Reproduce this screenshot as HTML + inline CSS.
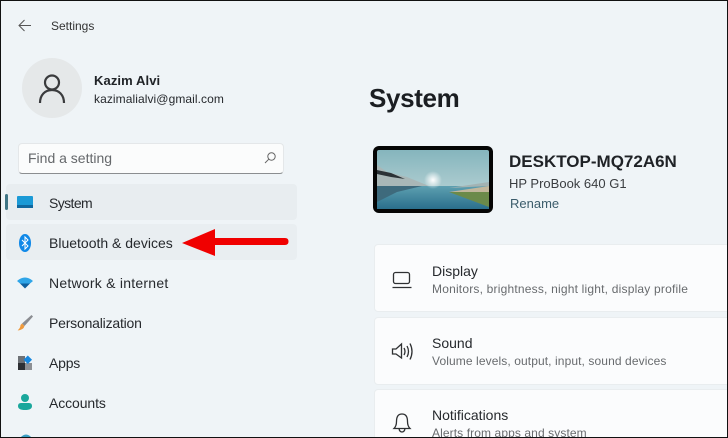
<!DOCTYPE html>
<html><head><meta charset="utf-8"><style>
html,body{margin:0;padding:0;width:728px;height:438px;overflow:hidden;background:#eff4f7}
body{position:relative;font-family:"Liberation Sans",sans-serif;color:#1f2226}
.t{position:absolute;white-space:nowrap;line-height:18px;height:18px}
.b{position:absolute}
.nav{font-size:14px;left:49px;color:#26292d}
.card{position:absolute;left:374px;width:360px;background:#fbfcfd;border:1px solid #e9edef;border-radius:4px;box-sizing:border-box}
.h{font-size:14px;left:432px;color:#26292d}
.s{font-size:12px;left:432px;color:#686b6e}
svg{position:absolute;overflow:visible}
</style></head><body>

<svg style="left:18px;top:19px" width="14" height="13" fill="none" stroke="#555" stroke-width="1"><path d="M1 6.500H13M6.500 1L1 6.500L6.500 12"/></svg>
<div class="t" style="left:51px;top:17px;font-size:12px;color:#333">Settings</div>

<div class="b" style="left:22px;top:58px;width:60px;height:60px;border-radius:50%;background:#e5e8e9"></div>
<svg style="left:39px;top:73px" width="26" height="30" fill="none" stroke="#3a3b3d" stroke-width="2.200"><circle cx="13" cy="9.500" r="7"/><path d="M1 30C1 22 6 17 13 17S25 22 25 30"/></svg>
<div class="t" style="left:94px;top:72px;font-size:13px;font-weight:bold;color:#202327;letter-spacing:.1px">Kazim Alvi</div>
<div class="t" style="left:94px;top:90px;font-size:12px;color:#26292d;letter-spacing:.08px">kazimalialvi@gmail.com</div>

<div class="b" style="left:18px;top:143px;width:266px;height:31px;box-sizing:border-box;background:#fbfcfc;border:1px solid #e4e7e9;border-bottom:1px solid #8b8e90;border-radius:4px"></div>
<div class="t" style="left:28px;top:149px;font-size:14px;color:#65686b">Find a setting</div>
<svg style="left:264px;top:152px" width="12" height="12" fill="none" stroke="#666" stroke-width="1"><circle cx="7.500" cy="4.500" r="3.700"/><path d="M4.800 7.200L1 11"/></svg>

<div class="b" style="left:6px;top:184px;width:291px;height:36px;background:#e8edf0;border-radius:4px"></div>
<div class="b" style="left:6px;top:224px;width:291px;height:36px;background:#e9eef1;border-radius:4px"></div>
<div class="b" style="left:5px;top:194px;width:3px;height:16px;background:#3f7585;border-radius:2px"></div>

<svg style="left:17px;top:196px" width="16" height="13"><rect x="0" y="0" width="16" height="12" rx="1" fill="#1b9ad6"/><rect x="0" y="9" width="16" height="3" fill="#10689f"/></svg>
<div class="t nav" style="top:194px;letter-spacing:-.6px">System</div>

<svg style="left:19px;top:234px" width="12" height="18"><ellipse cx="6" cy="9" rx="6" ry="9" fill="#0f88e8"/><path d="M3 6L9 12L6 15V3L9 6L3 12" fill="none" stroke="#fff" stroke-width="1"/></svg>
<div class="t nav" style="top:234px">Bluetooth &amp; devices</div>

<svg style="left:17px;top:277px" width="16" height="12"><path d="M0 4Q8 -3 16 4L13 6.500H3Z" fill="#2fa5e8"/><path d="M3 6.500H13L8 11.500Z" fill="#0f5f9e"/></svg>
<div class="t nav" style="top:274px;letter-spacing:.24px">Network &amp; internet</div>

<svg style="left:17px;top:315px" width="16" height="16"><path d="M14.500 0L16 1.500L7.500 11L5 8.500Z" fill="#8b8d92"/><path d="M5 8.500L7.500 11Q6.500 15 .5 15.500Q3.500 13 3.500 10Z" fill="#ef9a3c"/></svg>
<div class="t nav" style="top:314px;letter-spacing:-.2px">Personalization</div>

<svg style="left:18px;top:355px" width="15" height="15"><rect x="0" y="1" width="7" height="7" fill="#6d7176"/><rect x="0" y="8" width="7" height="7" fill="#2d3034"/><rect x="7" y="8" width="7" height="7" fill="#8d9094"/><rect x="6.800" y="1.800" width="6" height="6" transform="rotate(45 9.800 4.800)" fill="#1787de"/></svg>
<div class="t nav" style="top:354px;letter-spacing:-.2px">Apps</div>

<svg style="left:18px;top:394px" width="14" height="16"><circle cx="7" cy="4" r="4" fill="#1aa79c"/><path d="M0 12Q0 9 3 9H11Q14 9 14 12Q14 16 7 16Q0 16 0 12Z" fill="#1aa79c"/></svg>
<div class="t nav" style="top:394px;letter-spacing:-.1px">Accounts</div>

<svg style="left:20px;top:434px" width="12" height="4"><path d="M0 4Q6 -3 12 4Z" fill="#3a9fc4"/></svg>

<svg style="left:0;top:0" width="728" height="438"><path d="M182 243L215 229V238H285Q288.500 238 288.500 241.500Q288.500 245 285 245H215V256Z" fill="#f00000"/></svg>

<div class="t" style="left:369px;top:80px;font-size:26px;line-height:36px;height:36px;font-weight:bold;color:#1b1e22;letter-spacing:-.35px">System</div>

<div class="b" style="left:373px;top:146px;width:120px;height:67px;background:#050505;border-radius:6px"></div>
<svg style="left:377px;top:150px" width="112" height="59"><defs>
<linearGradient id="sky" x1="0" y1="0" x2="0" y2="1"><stop offset="0" stop-color="#85b5bd"/><stop offset="1" stop-color="#c3d9da"/></linearGradient>
<linearGradient id="wat" x1="0" y1="0" x2="0" y2="1"><stop offset="0" stop-color="#5d9fb0"/><stop offset="1" stop-color="#2a6f8c"/></linearGradient>
<radialGradient id="sun"><stop offset="0" stop-color="#fff"/><stop offset="1" stop-color="#fff" stop-opacity="0"/></radialGradient></defs>
<rect width="112" height="59" rx="2" fill="url(#sky)"/>
<rect y="36" width="112" height="23" fill="url(#wat)"/>
<path d="M0 15L10 22L30 27L52 36H0Z" fill="#a9b7b7"/>
<path d="M0 20L14 23L28 29L14 27L0 24Z" fill="#2b3236"/>
<path d="M0 36H45L20 42L0 52Z" fill="#3e6a7c"/>
<path d="M72 38L112 32V36Z" fill="#a3b3b3"/>
<path d="M72 42L112 36V43Z" fill="#c2b79c"/>
<path d="M72 42L112 42V57Z" fill="#6b8a4a"/>
<circle cx="56" cy="30" r="9" fill="url(#sun)"/></svg>

<div class="t" style="left:509px;top:153px;font-size:17px;font-weight:bold;color:#1f2226">DESKTOP-MQ72A6N</div>
<div class="t" style="left:509px;top:175px;font-size:13px;color:#3a3d40">HP ProBook 640 G1</div>
<div class="t" style="left:510px;top:195px;font-size:13px;color:#3b5c6b">Rename</div>

<div class="card" style="top:244px;height:68px"></div>
<svg style="left:392px;top:272px" width="20" height="17" fill="none" stroke="#2f3133" stroke-width="1.300"><rect x="1.500" y=".5" width="16" height="11" rx="2"/><path d="M.5 15.500H19.500"/></svg>
<div class="t h" style="top:262px">Display</div>
<div class="t s" style="top:280px;letter-spacing:.2px">Monitors, brightness, night light, display profile</div>

<div class="card" style="top:317px;height:68px"></div>
<svg style="left:392px;top:342px" width="20" height="19" fill="none" stroke="#2f3133" stroke-width="1.300"><path d="M.5 7H4L9.500 2V16L4 12H.5Z"/><path d="M12 6Q14 9.500 12 13M15 4Q18 9.500 15 15M18 1.500Q22 9.500 18 17.500"/></svg>
<div class="t h" style="top:334px">Sound</div>
<div class="t s" style="top:352px;letter-spacing:.1px">Volume levels, output, input, sound devices</div>

<div class="card" style="top:389px;height:68px"></div>
<svg style="left:393px;top:413px" width="18" height="20" fill="none" stroke="#2f3133" stroke-width="1.300"><path d="M1 15.500Q3.500 13 3.500 8.500Q3.500 1 9 1T14.500 8.500Q14.500 13 17 15.500ZM6 15.500Q6.500 19 9 19T12 15.500"/></svg>
<div class="t h" style="top:406px">Notifications</div>
<div class="t s" style="top:424px;letter-spacing:.1px">Alerts from apps and system</div>

<div class="b" style="left:0;top:0;width:728px;height:1px;background:#111"></div>
<div class="b" style="left:0;top:0;width:1px;height:438px;background:#111"></div>
<div class="b" style="left:727px;top:0;width:1px;height:438px;background:#111"></div>
<div class="b" style="left:0;top:437px;width:728px;height:1px;background:#111"></div>
</body></html>
